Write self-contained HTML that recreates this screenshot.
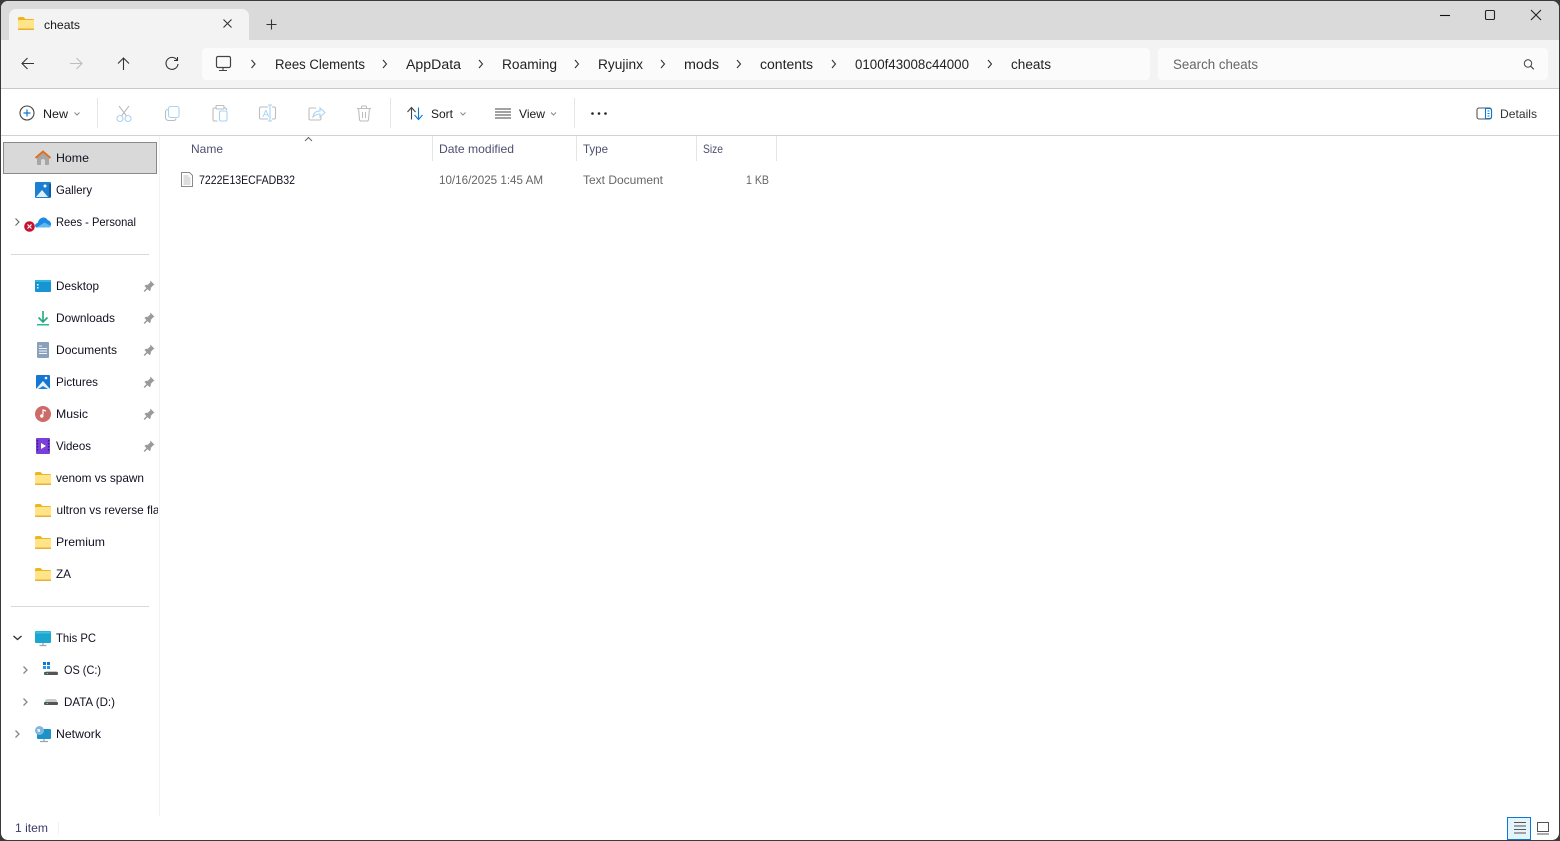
<!DOCTYPE html>
<html><head><meta charset="utf-8"><title>cheats</title>
<style>
html,body{margin:0;padding:0;background:#fff;width:1560px;height:841px;overflow:hidden}
svg{display:block}
text{font-family:"Liberation Sans",sans-serif;font-size:12px;fill:#1a1a1a}
.a{font-size:13.5px;fill:#222}
.n{font-size:12px;fill:#101020}
.h{fill:#4c5070;font-size:12px}
.g{fill:#666;font-size:12px}
.c{fill:none;stroke:#333;stroke-width:1.1}
.l{fill:none;stroke:#666;stroke-width:1.1}
.d{fill:none;stroke:#bdbdbd;stroke-width:1.1}
.b{fill:none;stroke:#a9d3f2;stroke-width:1.1}
.p{fill:#9a9a9a}
</style></head><body>
<svg width="1560" height="841" viewBox="0 0 1560 841" xmlns="http://www.w3.org/2000/svg">
<defs>
<g id="folder"><path d="M0 2.500a1.500 1.500 0 0 1 1.500-1.500h4l2 2h7a1.500 1.500 0 0 1 1.500 1.500v8a1.500 1.500 0 0 1-1.500 1.500h-13a1.500 1.500 0 0 1-1.500-1.500z" fill="#f0b420"/><rect x="0" y="4" width="16" height="9.500" rx="1" fill="#ffe48a"/><path d="M0 12.500h16v.7a.8.8 0 0 1-.8.8H.8a.8.8 0 0 1-.8-.8z" fill="#e8b030"/></g>
<g id="pin"><path d="M6.800 0l4.200 4.200-1.300.7-2.300 2.300-.2 2.300-1.100 1.100-2-2-3 2.900-1-1 2.900-3-2-2 1.100-1.100 2.300-.2 2.300-2.300z" class="p"/></g>
</defs>

<!-- window backdrop / frame -->
<rect width="1560" height="841" fill="#3a3a3a"/>
<path d="M8 1H1552a7 7 0 0 1 7 7V833a7 7 0 0 1-7 7H8a7 7 0 0 1-7-7V8a7 7 0 0 1 7-7z" fill="#fff"/>
<path d="M8 1H1552a7 7 0 0 1 7 7V40H1V8a7 7 0 0 1 7-7z" fill="#dadada"/>
<rect x="1" y="40" width="1558" height="48" fill="#f3f3f3"/>
<rect x="1" y="88" width="1558" height="1" fill="#c9c9c9"/>
<rect x="1" y="135" width="1558" height="1" fill="#d2d2d2"/>

<!-- tab -->
<path d="M9 40V16a7 7 0 0 1 7-7H242a7 7 0 0 1 7 7V40z" fill="#f3f3f3"/>
<use href="#folder" x="18" y="16"/>
<text x="44" y="29" textLength="36" lengthAdjust="spacingAndGlyphs">cheats</text>
<path d="M223.500 19.500l8 8M231.500 19.500l-8 8" class="c"/>
<path d="M271.500 19.500v10M266.500 24.500h10" class="c"/>

<!-- window buttons -->
<path d="M1440 15.500h10" stroke="#111" stroke-width="1.100" fill="none"/>
<rect x="1485.500" y="10.500" width="9" height="9" rx="1.200" fill="none" stroke="#222" stroke-width="1.100"/>
<path d="M1531 10l10 10M1541 10l-10 10" stroke="#222" stroke-width="1.100" fill="none"/>

<!-- nav -->
<path d="M34 63.500H22M27.500 58l-5.500 5.500 5.500 5.500" class="c"/>
<path d="M82 63.500H70M76.500 58l5.500 5.500-5.500 5.500" class="d"/>
<path d="M123.500 70V58M118 63.500l5.500-5.500 5.500 5.500" class="c"/>
<path d="M177 60a6 6 0 1 0 1 4M177.500 57v3.500h-3.500" class="c"/>

<!-- address -->
<rect x="202" y="48" width="948" height="32" rx="4" fill="#fbfbfb"/>
<rect x="216.500" y="56.500" width="14" height="11" rx="1.500" fill="none" stroke="#444" stroke-width="1.200"/>
<path d="M223 68v2M219 70.500h8" stroke="#444" stroke-width="1.100" fill="none"/>
<g class="c" fill="none">
<path d="M251.500 60l3.500 4-3.500 4"/><path d="M383 60l3.500 4-3.500 4"/><path d="M479 60l3.500 4-3.500 4"/><path d="M575 60l3.500 4-3.500 4"/><path d="M661 60l3.500 4-3.500 4"/><path d="M737 60l3.500 4-3.500 4"/><path d="M832 60l3.500 4-3.500 4"/><path d="M988 60l3.500 4-3.500 4"/>
</g>
<text class="a" x="275" y="69" textLength="90" lengthAdjust="spacingAndGlyphs">Rees Clements</text>
<text class="a" x="406" y="69" textLength="55" lengthAdjust="spacingAndGlyphs">AppData</text>
<text class="a" x="502" y="69" textLength="55" lengthAdjust="spacingAndGlyphs">Roaming</text>
<text class="a" x="598" y="69" textLength="45" lengthAdjust="spacingAndGlyphs">Ryujinx</text>
<text class="a" x="684" y="69" textLength="35" lengthAdjust="spacingAndGlyphs">mods</text>
<text class="a" x="760" y="69" textLength="53" lengthAdjust="spacingAndGlyphs">contents</text>
<text class="a" x="855" y="69" textLength="114" lengthAdjust="spacingAndGlyphs">0100f43008c44000</text>
<text class="a" x="1011" y="69" textLength="40" lengthAdjust="spacingAndGlyphs">cheats</text>

<!-- search -->
<rect x="1158" y="48" width="390" height="32" rx="4" fill="#fbfbfb"/>
<text x="1173" y="69" style="font-size:13.500px;fill:#666" textLength="85" lengthAdjust="spacingAndGlyphs">Search cheats</text>
<circle cx="1528" cy="63.500" r="3.700" fill="none" stroke="#444" stroke-width="1"/>
<path d="M1530.800 66.300l3 3" stroke="#444" stroke-width="1.100"/>

<!-- command bar -->
<circle cx="27" cy="113" r="7" fill="none" stroke="#444" stroke-width="1.100"/>
<path d="M27 109.500v7M23.500 113h7" stroke="#0a78d4" stroke-width="1.200"/>
<text x="43" y="118" textLength="25" lengthAdjust="spacingAndGlyphs">New</text>
<path d="M74.500 112.500l2.500 2.500 2.500-2.500" fill="none" stroke="#888"/>
<rect x="97" y="98" width="1" height="30" fill="#e6e6e6"/>

<!-- cut -->
<path d="M119 106l7.500 10M129 106l-7.500 10" class="d"/>
<circle cx="120" cy="118.500" r="3" class="b"/><circle cx="128" cy="118.500" r="3" class="b"/>
<!-- copy -->
<rect x="168.500" y="106.500" width="10.500" height="11" rx="2" class="b"/>
<path d="M168 109.500a2.500 2.500 0 0 0-2.500 2.500v5.500a3 3 0 0 0 3 3h5a2.500 2.500 0 0 0 2.500-2" class="d"/>
<!-- paste -->
<path d="M216 108h-1.500a1.500 1.500 0 0 0-1.500 1.500v10a1.500 1.500 0 0 0 1.500 1.500h3M224 108h1a1.500 1.500 0 0 1 1.500 1.500v.5" class="d"/>
<rect x="216" y="105.500" width="8" height="3.500" rx="1" class="d"/>
<rect x="219.500" y="111" width="7.500" height="10" rx="1.500" class="b"/>
<!-- rename -->
<path d="M268 107h-7a1.500 1.500 0 0 0-1.500 1.500v9a1.500 1.500 0 0 0 1.500 1.500h7M272 107h2a1.500 1.500 0 0 1 1.500 1.500v9a1.500 1.500 0 0 1-1.500 1.500h-2" class="d"/>
<path d="M268 105h4M270 105v16M268 121h4" class="b"/>
<text x="262.500" y="117" style="font-size:10px;fill:#a9d3f2">A</text>
<!-- share -->
<path d="M316 108h-5.500a1.500 1.500 0 0 0-1.500 1.500v9a1.500 1.500 0 0 0 1.500 1.500h9a1.500 1.500 0 0 0 1.500-1.500v-2" class="d"/>
<path d="M313 117c.5-4 3-6 7-6v-3l5 4.500-5 4.500v-3c-3 0-5 1-7 3z" class="b"/>
<!-- delete -->
<path d="M357 108.500h14M361.500 108.500v-1.500a1 1 0 0 1 1-1h3a1 1 0 0 1 1 1v1.500M358.500 108.500l1 11a1.500 1.500 0 0 0 1.500 1.500h6a1.500 1.500 0 0 0 1.500-1.500l1-11M362.500 112v6M365.500 112v6" class="d"/>
<rect x="390" y="98" width="1" height="30" fill="#e6e6e6"/>

<!-- sort -->
<path d="M411.500 119.500V108M407.500 112l4-4.500 4 4.500" fill="none" stroke="#444" stroke-width="1.100"/>
<path d="M418.500 107.500V119M414.500 115l4 4.500 4-4.500" fill="none" stroke="#0a78d4" stroke-width="1.100"/>
<text x="431" y="118" textLength="22" lengthAdjust="spacingAndGlyphs">Sort</text>
<path d="M460.500 112.500l2.500 2.500 2.500-2.500" fill="none" stroke="#888"/>
<!-- view -->
<path d="M495 109h16M495 112h16M495 115h16M495 118h16" stroke="#444" stroke-width=".9" fill="none"/>
<text x="519" y="118" textLength="26" lengthAdjust="spacingAndGlyphs">View</text>
<path d="M551 112.500l2.500 2.500 2.500-2.500" fill="none" stroke="#888"/>
<rect x="574" y="98" width="1" height="30" fill="#e6e6e6"/>
<circle cx="592.500" cy="113.500" r="1.300" fill="#222"/><circle cx="599" cy="113.500" r="1.300" fill="#222"/><circle cx="605.500" cy="113.500" r="1.300" fill="#222"/>

<!-- details -->
<rect x="1477" y="108" width="14.500" height="11" rx="2" fill="none" stroke="#555" stroke-width="1.100"/>
<path d="M1485.500 108.500h4a2 2 0 0 1 2 2v6a2 2 0 0 1-2 2h-4z" fill="#fff" stroke="#0a78d4" stroke-width="1.100"/>
<path d="M1487.500 111h2M1487.500 113.500h2M1487.500 116h2" stroke="#0a78d4" stroke-width=".9"/>
<text x="1500" y="118" textLength="37" lengthAdjust="spacingAndGlyphs" style="fill:#333">Details</text>

<!-- nav pane -->
<rect x="159" y="136" width="1" height="680" fill="#f2f2f2"/>
<rect x="3.500" y="142.500" width="153" height="31" fill="#d9d9d9" stroke="#8a8a8a"/>

<!-- home icon -->
<path d="M37 157v7a1 1 0 0 0 1 1h3v-4a2 2 0 0 1 4 0v4h3a1 1 0 0 0 1-1v-7l-6-5z" fill="#a6a6a6"/>
<path d="M35.500 158l7.500-6.500 7.500 6.500" fill="none" stroke="#e0701e" stroke-width="1.900"/>
<text class="n" x="56" y="162" textLength="33" lengthAdjust="spacingAndGlyphs">Home</text>

<!-- gallery icon -->
<rect x="35" y="182" width="16" height="16" rx="1" fill="#1d7fd1"/>
<rect x="49" y="184" width="2" height="13" fill="#125c9e"/>
<path d="M36 197l6-7 6 7z" fill="#dff0fb"/><circle cx="45" cy="186" r="1.500" fill="#fff"/>
<text class="n" x="56" y="194" textLength="36" lengthAdjust="spacingAndGlyphs">Gallery</text>

<!-- onedrive row -->
<path d="M15.500 218.500l3.500 3.500-3.500 3.500" class="l" stroke-width="1.300"/>
<path d="M37 227.500c-2 0-2.500-2.500-1-3.800.5-.5 1.200-.7 1.800-.7.500-3 2.700-5.500 5.700-5.500 2 0 3.500 1 4.300 2.800 1.800.3 3.200 1.900 3.200 3.700 0 2-1.300 3.500-3 3.500z" fill="#1e88e5"/>
<path d="M36.500 227.500l8-5 6.500 3.500c-.4 1-1.200 1.500-2.500 1.500z" fill="#5fb8f2"/>
<circle cx="29.500" cy="226.500" r="5.300" fill="#c4122f"/>
<path d="M27.500 224.500l4 4M31.500 224.500l-4 4" stroke="#fff" stroke-width="1.200"/>
<text class="n" x="56" y="226" textLength="80" lengthAdjust="spacingAndGlyphs">Rees - Personal</text>

<rect x="11" y="254" width="138" height="1" fill="#d9d9d9"/>

<!-- desktop -->
<rect x="35" y="280" width="16" height="12" rx="1" fill="#1794d2"/>
<rect x="35" y="280" width="16" height="2" fill="#35b6e0"/>
<rect x="37" y="284" width="1.500" height="1.500" fill="#fff"/><rect x="37" y="287" width="1.500" height="1.500" fill="#d8f1fb"/>
<text class="n" x="56" y="290" textLength="43" lengthAdjust="spacingAndGlyphs">Desktop</text>
<use href="#pin" x="143.500" y="280.500"/>

<!-- downloads -->
<path d="M43 311v11M38.500 317.500l4.500 4.500 4.500-4.500" fill="none" stroke="#1faa7e" stroke-width="1.600"/>
<rect x="37" y="324" width="12" height="1.500" fill="#25b99a"/>
<text class="n" x="56" y="322" textLength="59" lengthAdjust="spacingAndGlyphs">Downloads</text>
<use href="#pin" x="143.500" y="312.500"/>

<!-- documents -->
<rect x="37" y="342" width="12" height="16" rx="1" fill="#8aa0bb"/>
<path d="M39 346h3M39 348.500h8M39 351h8M39 353.500h8" stroke="#f1f5fa" stroke-width="1"/>
<text class="n" x="56" y="354" textLength="61" lengthAdjust="spacingAndGlyphs">Documents</text>
<use href="#pin" x="143.500" y="344.500"/>

<!-- pictures -->
<rect x="36" y="375" width="14" height="14" rx="1" fill="#1478d2"/>
<path d="M36 389l7-8 7 8z" fill="#e4f2fc"/><path d="M38 389l5-3 5 3z" fill="#1d7fd1"/><circle cx="46" cy="378" r="1.300" fill="#fff"/>
<text class="n" x="56" y="386" textLength="42" lengthAdjust="spacingAndGlyphs">Pictures</text>
<use href="#pin" x="143.500" y="376.500"/>

<!-- music -->
<circle cx="43" cy="414" r="8" fill="#cc6b68"/>
<path d="M43 414.500v-4.500l3 1" fill="none" stroke="#fff" stroke-width="1.200"/>
<circle cx="41.800" cy="416" r="1.700" fill="#fff"/>
<text class="n" x="56" y="418" textLength="32" lengthAdjust="spacingAndGlyphs">Music</text>
<use href="#pin" x="143.500" y="408.500"/>

<!-- videos -->
<rect x="36" y="438" width="14" height="16" rx="1" fill="#7a3fd6"/>
<path d="M41 443l5 3-5 3z" fill="#fff"/>
<path d="M37.500 440v12M48.500 440v12" stroke="#2d1a6e" stroke-width="1.200" stroke-dasharray="1.500 1.500"/>
<text class="n" x="56" y="450" textLength="35" lengthAdjust="spacingAndGlyphs">Videos</text>
<use href="#pin" x="143.500" y="440.500"/>

<use href="#folder" x="35" y="471"/>
<text class="n" x="56" y="482" textLength="88" lengthAdjust="spacingAndGlyphs">venom vs spawn</text>
<use href="#folder" x="35" y="503"/>
<svg x="0" y="500" width="158" height="20"><text class="n" x="56.500" y="14" textLength="103" lengthAdjust="spacingAndGlyphs">ultron vs reverse fla</text></svg>
<use href="#folder" x="35" y="535"/>
<text class="n" x="56" y="546" textLength="49" lengthAdjust="spacingAndGlyphs">Premium</text>
<use href="#folder" x="35" y="567"/>
<text class="n" x="56" y="578" textLength="15" lengthAdjust="spacingAndGlyphs">ZA</text>

<rect x="11" y="606" width="138" height="1" fill="#d9d9d9"/>

<!-- this pc -->
<path d="M13.500 636l4 3.500 4-3.500" fill="none" stroke="#333" stroke-width="1.400"/>
<rect x="35" y="631" width="16" height="12" rx="1" fill="#1ba6cf"/>
<path d="M35.500 631.500h15v2h-15z" fill="#3dc3dd"/>
<path d="M43 643v2M39.500 645.500h7" stroke="#98a6ad" stroke-width="1.200"/>
<text class="n" x="56" y="642" textLength="40" lengthAdjust="spacingAndGlyphs">This PC</text>

<path d="M23.500 666.500l3.500 3.500-3.500 3.500" fill="none" stroke="#888" stroke-width="1.300"/>
<rect x="43" y="662" width="3" height="3" fill="#0a78d4"/><rect x="47" y="662" width="3" height="3" fill="#0a78d4"/><rect x="43" y="666" width="3" height="3" fill="#2a94e6"/><rect x="47" y="666" width="3" height="3" fill="#2a94e6"/>
<path d="M45 672.500l1-1.500h10.500l1 1.500z" fill="#c9c9c9"/>
<rect x="44" y="672" width="14" height="3" rx="1" fill="#555"/>
<rect x="46.500" y="673" width="1.500" height="1" fill="#5ce06a"/>
<text class="n" x="64" y="674" textLength="37" lengthAdjust="spacingAndGlyphs">OS (C:)</text>

<path d="M23.500 698.500l3.500 3.500-3.500 3.500" fill="none" stroke="#888" stroke-width="1.300"/>
<path d="M45 702a2.500 2.500 0 0 1 2-3h8a2.500 2.500 0 0 1 2 3z" fill="#c9c9c9"/>
<rect x="44" y="702" width="14" height="3" rx="1" fill="#555"/>
<rect x="46.500" y="703" width="1.500" height="1" fill="#5ce06a"/>
<text class="n" x="64" y="706" textLength="51" lengthAdjust="spacingAndGlyphs">DATA (D:)</text>

<path d="M15.500 730.500l3.500 3.500-3.500 3.500" fill="none" stroke="#888" stroke-width="1.300"/>
<rect x="37" y="729" width="14" height="10" rx="1" fill="#1b93c6"/>
<path d="M44 739v2M40 741.500h8" stroke="#98a6ad" stroke-width="1.200"/>
<circle cx="39.500" cy="730.500" r="4.500" fill="#7fb8dc"/>
<path d="M37 729h3v3h-2z" fill="#dff0fb"/>
<text class="n" x="56" y="738" textLength="45" lengthAdjust="spacingAndGlyphs">Network</text>

<!-- column headers -->
<path d="M305 141l3.500-3.500 3.500 3.500" fill="none" stroke="#666"/>
<rect x="432" y="136" width="1" height="25" fill="#e4e4e4"/>
<rect x="576" y="136" width="1" height="25" fill="#e4e4e4"/>
<rect x="696" y="136" width="1" height="25" fill="#e4e4e4"/>
<rect x="776" y="136" width="1" height="25" fill="#e4e4e4"/>
<text class="h" x="191" y="153" textLength="32" lengthAdjust="spacingAndGlyphs">Name</text>
<text class="h" x="439" y="153" textLength="75" lengthAdjust="spacingAndGlyphs">Date modified</text>
<text class="h" x="583" y="153" textLength="25" lengthAdjust="spacingAndGlyphs">Type</text>
<text class="h" x="703" y="153" textLength="20" lengthAdjust="spacingAndGlyphs">Size</text>

<!-- file row -->
<path d="M181.500 172.500h8l3 3v11h-11z" fill="#fff" stroke="#8a8a8a"/>
<path d="M183.500 176h5M183.500 178h7M183.500 180h7M183.500 182h7M183.500 184h7" stroke="#a8a8a8" stroke-width=".8"/>
<text class="n" x="199" y="184" textLength="96" lengthAdjust="spacingAndGlyphs">7222E13ECFADB32</text>
<text class="g" x="439" y="184" textLength="104" lengthAdjust="spacingAndGlyphs">10/16/2025 1:45 AM</text>
<text class="g" x="583" y="184" textLength="80" lengthAdjust="spacingAndGlyphs">Text Document</text>
<text class="g" x="746" y="184" textLength="23" lengthAdjust="spacingAndGlyphs">1 KB</text>

<!-- status bar -->
<text x="15" y="832" textLength="33" lengthAdjust="spacingAndGlyphs" style="fill:#3a3a6a">1 item</text>
<rect x="58" y="822" width="1" height="13" fill="#f2f2f2"/>
<rect x="1507.500" y="817.500" width="23" height="22" fill="#e5f3fb" stroke="#0a78d4" stroke-width="1"/>
<path d="M1514 822.500h12M1514 826h12M1514 829.500h12M1514 833h12" stroke="#555" stroke-width="1"/>
<rect x="1537.500" y="822.500" width="11" height="9" fill="none" stroke="#555"/>
<path d="M1537 834h12" stroke="#555"/>
</svg>
</body></html>
